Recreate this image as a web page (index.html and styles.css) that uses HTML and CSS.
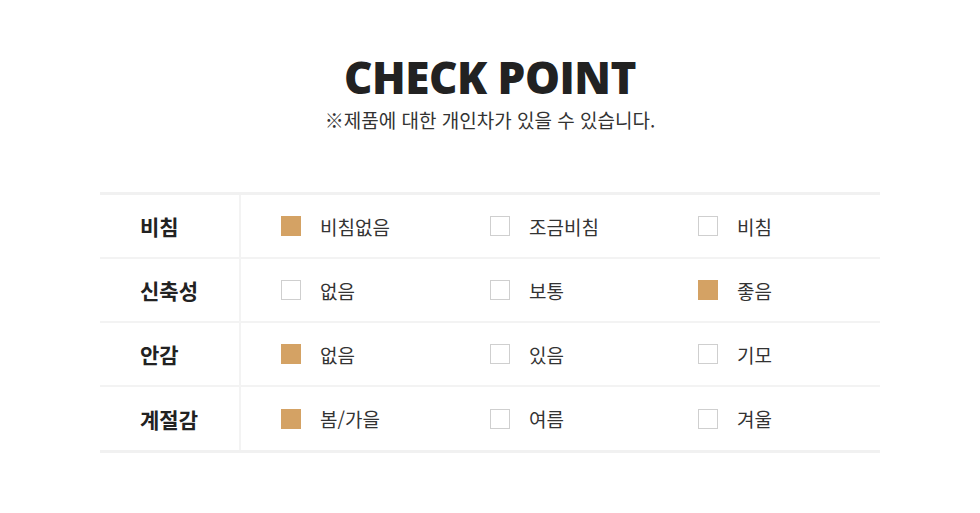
FILE: index.html
```html
<!DOCTYPE html>
<html lang="ko">
<head>
<meta charset="utf-8">
<link rel="stylesheet" href="styles.css">
</head>
<body>
<div class="page">
  <header class="head">
    <h1 class="title">CHECK POINT</h1>
    <p class="sub">※제품에 대한 개인차가 있을 수 있습니다.</p>
  </header>
  <div class="table">
    <div class="row">
      <div class="label">비침</div>
      <div class="opts">
        <div class="opt"><span class="box on"></span><span class="txt">비침없음</span></div>
        <div class="opt"><span class="box"></span><span class="txt">조금비침</span></div>
        <div class="opt"><span class="box"></span><span class="txt">비침</span></div>
      </div>
    </div>
    <div class="row">
      <div class="label">신축성</div>
      <div class="opts">
        <div class="opt"><span class="box"></span><span class="txt">없음</span></div>
        <div class="opt"><span class="box"></span><span class="txt">보통</span></div>
        <div class="opt"><span class="box on"></span><span class="txt">좋음</span></div>
      </div>
    </div>
    <div class="row">
      <div class="label">안감</div>
      <div class="opts">
        <div class="opt"><span class="box on"></span><span class="txt">없음</span></div>
        <div class="opt"><span class="box"></span><span class="txt">있음</span></div>
        <div class="opt"><span class="box"></span><span class="txt">기모</span></div>
      </div>
    </div>
    <div class="row last">
      <div class="label">계절감</div>
      <div class="opts">
        <div class="opt"><span class="box on"></span><span class="txt">봄/가을</span></div>
        <div class="opt"><span class="box"></span><span class="txt">여름</span></div>
        <div class="opt"><span class="box"></span><span class="txt">겨울</span></div>
      </div>
    </div>
  </div>
</div>
</body>
</html>
```
FILE: styles.css
```css
* { box-sizing: border-box; }
html, body { margin: 0; padding: 0; background: #fff; }
body { font-family: "Noto Sans CJK KR", "Noto Sans", sans-serif; color: #222; }
.page { width: 980px; padding-top: 52px; }
.head { text-align: center; }
.title {
  margin: 0;
  font-family: "Open Sans", "Noto Sans", sans-serif;
  font-weight: 800;
  font-size: 44px;
  line-height: 50px;
  letter-spacing: -0.5px;
  color: #222;
}
.sub {
  margin: 4px 0 0;
  font-size: 19px;
  line-height: 28px;
  letter-spacing: 0;
  font-weight: 400;
  color: #333;
}
.table {
  margin: 58px 100px 0;
  border-top: 3px solid #f1f1f1;
  border-bottom: 3px solid #f1f1f1;
}
.row {
  display: flex;
  height: 64px;
  border-bottom: 2px solid #f3f3f3;
}
.row.last { border-bottom: 0; height: 63px; }
.label {
  width: 141px;
  border-right: 2px solid #f3f3f3;
  padding-left: 40px;
  display: flex;
  align-items: center;
  font-size: 21px;
  font-weight: 700;
  letter-spacing: 0;
  color: #222;
}
.opts {
  flex: 1;
  display: grid;
  grid-template-columns: 209px 208px 1fr;
  padding-left: 40px;
  align-items: center;
}
.opt { display: flex; align-items: center; }
.box {
  width: 20px;
  height: 20px;
  border: 1px solid #cfcfcf;
  background: #fff;
  flex: none;
}
.box.on { background: #d4a264; border-color: #d4a264; }
.txt {
  margin-left: 19px;
  font-size: 19px;
  font-weight: 400;
  letter-spacing: 0;
  color: #333;
}
```
